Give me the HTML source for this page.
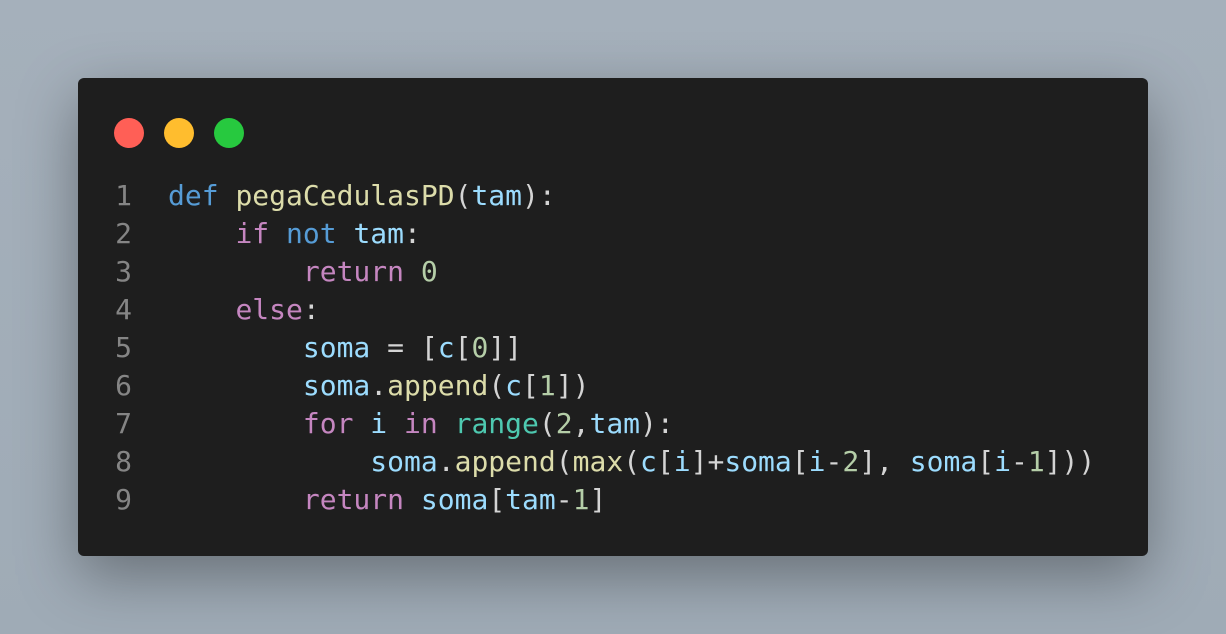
<!DOCTYPE html>
<html><head><style>
html,body{margin:0;padding:0}
body{width:1226px;height:634px;overflow:hidden;background:linear-gradient(180deg,#a5b0bb,#9fabb6);position:relative;font-family:"DejaVu Sans Mono","Liberation Mono",monospace}
.win{position:absolute;left:78px;top:78px;width:1070px;height:478px;background:#1e1e1e;border-radius:6px;box-shadow:0 20px 60px rgba(0,0,0,.35)}
.dot{position:absolute;top:40px;width:30px;height:30px;border-radius:50%}
pre{position:absolute;margin:0;top:99px;font:28px/38px "DejaVu Sans Mono",monospace;color:#d4d4d4}
.ln{left:37px;width:17px;text-align:right;color:#858585}
.code{left:90px}
.k{color:#569cd6}.f{color:#dcdcaa}.v{color:#9cdcfe}.c{color:#c586c0}.n{color:#b5cea8}.b{color:#4ec9b0}
</style></head><body>
<div class="win">
<div class="dot" style="left:36px;background:#ff5f56"></div>
<div class="dot" style="left:86px;background:#ffbd2e"></div>
<div class="dot" style="left:136px;background:#27c93f"></div>
<pre class="ln">1
2
3
4
5
6
7
8
9</pre>
<pre class="code"><span class="k">def</span> <span class="f">pegaCedulasPD</span>(<span class="v">tam</span>):
    <span class="c">if</span> <span class="k">not</span> <span class="v">tam</span>:
        <span class="c">return</span> <span class="n">0</span>
    <span class="c">else</span>:
        <span class="v">soma</span> = [<span class="v">c</span>[<span class="n">0</span>]]
        <span class="v">soma</span>.<span class="f">append</span>(<span class="v">c</span>[<span class="n">1</span>])
        <span class="c">for</span> <span class="v">i</span> <span class="c">in</span> <span class="b">range</span>(<span class="n">2</span>,<span class="v">tam</span>):
            <span class="v">soma</span>.<span class="f">append</span>(<span class="f">max</span>(<span class="v">c</span>[<span class="v">i</span>]+<span class="v">soma</span>[<span class="v">i</span>-<span class="n">2</span>], <span class="v">soma</span>[<span class="v">i</span>-<span class="n">1</span>]))
        <span class="c">return</span> <span class="v">soma</span>[<span class="v">tam</span>-<span class="n">1</span>]</pre>
</div>
</body></html>
